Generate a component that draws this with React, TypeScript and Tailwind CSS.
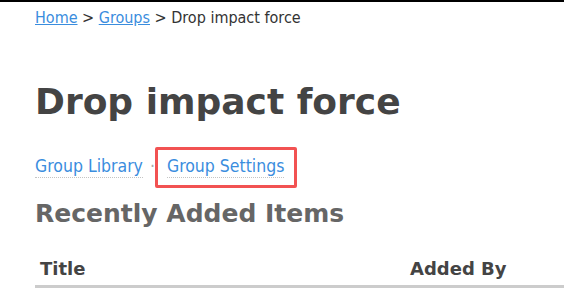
export default function App() {
  const cond = { fontFamily: 'Tahoma, "DejaVu Sans Condensed", "DejaVu Sans", sans-serif' };
  return (
    <div className="w-[564px] h-[288px] overflow-hidden bg-white border-t-2 border-black" style={{ fontFamily: '"DejaVu Sans", Verdana, sans-serif' }}>
      <div className="pl-[35px] pt-[5px]">
        <nav className="text-[16px] text-[#333] leading-[22px]" style={cond}>
          <a href="#" className="text-[#3a8dde] underline">Home</a>
          <span> &gt; </span>
          <a href="#" className="text-[#3a8dde] underline">Groups</a>
          <span> &gt; Drop impact force</span>
        </nav>
        <h1 className="mt-[51px] text-[36px] font-bold text-[#444] leading-[44px]">Drop impact force</h1>
        <div className="mt-[23px] flex items-start text-[17.5px]" style={cond}>
          <a href="#" className="mt-[8px] text-[#3a8dde] border-b border-dotted border-[#c4c4c4] leading-[22px]">Group Library</a>
          <span className="mt-[8px] ml-[7px] text-[#aaa] leading-[22px]">·</span>
          <div className="border-[3px] border-[#f25252] rounded-[2px] pl-[9px] pr-[10px] pt-[5px] pb-[7px]">
            <a href="#" className="text-[#3a8dde] border-b border-dotted border-[#c4c4c4] leading-[22px] block">Group Settings</a>
          </div>
        </div>
        <h2 className="mt-[10px] text-[25px] font-bold text-[#666] leading-[32px]">Recently Added Items</h2>
        <div className="mt-[27px] flex border-b-[3px] border-[#ccc] pb-[4px] text-[18px] leading-[24px] font-bold text-[#444]">
          <div className="pl-[5px] w-[375px]">Title</div>
          <div>Added By</div>
        </div>
      </div>
    </div>
  );
}
